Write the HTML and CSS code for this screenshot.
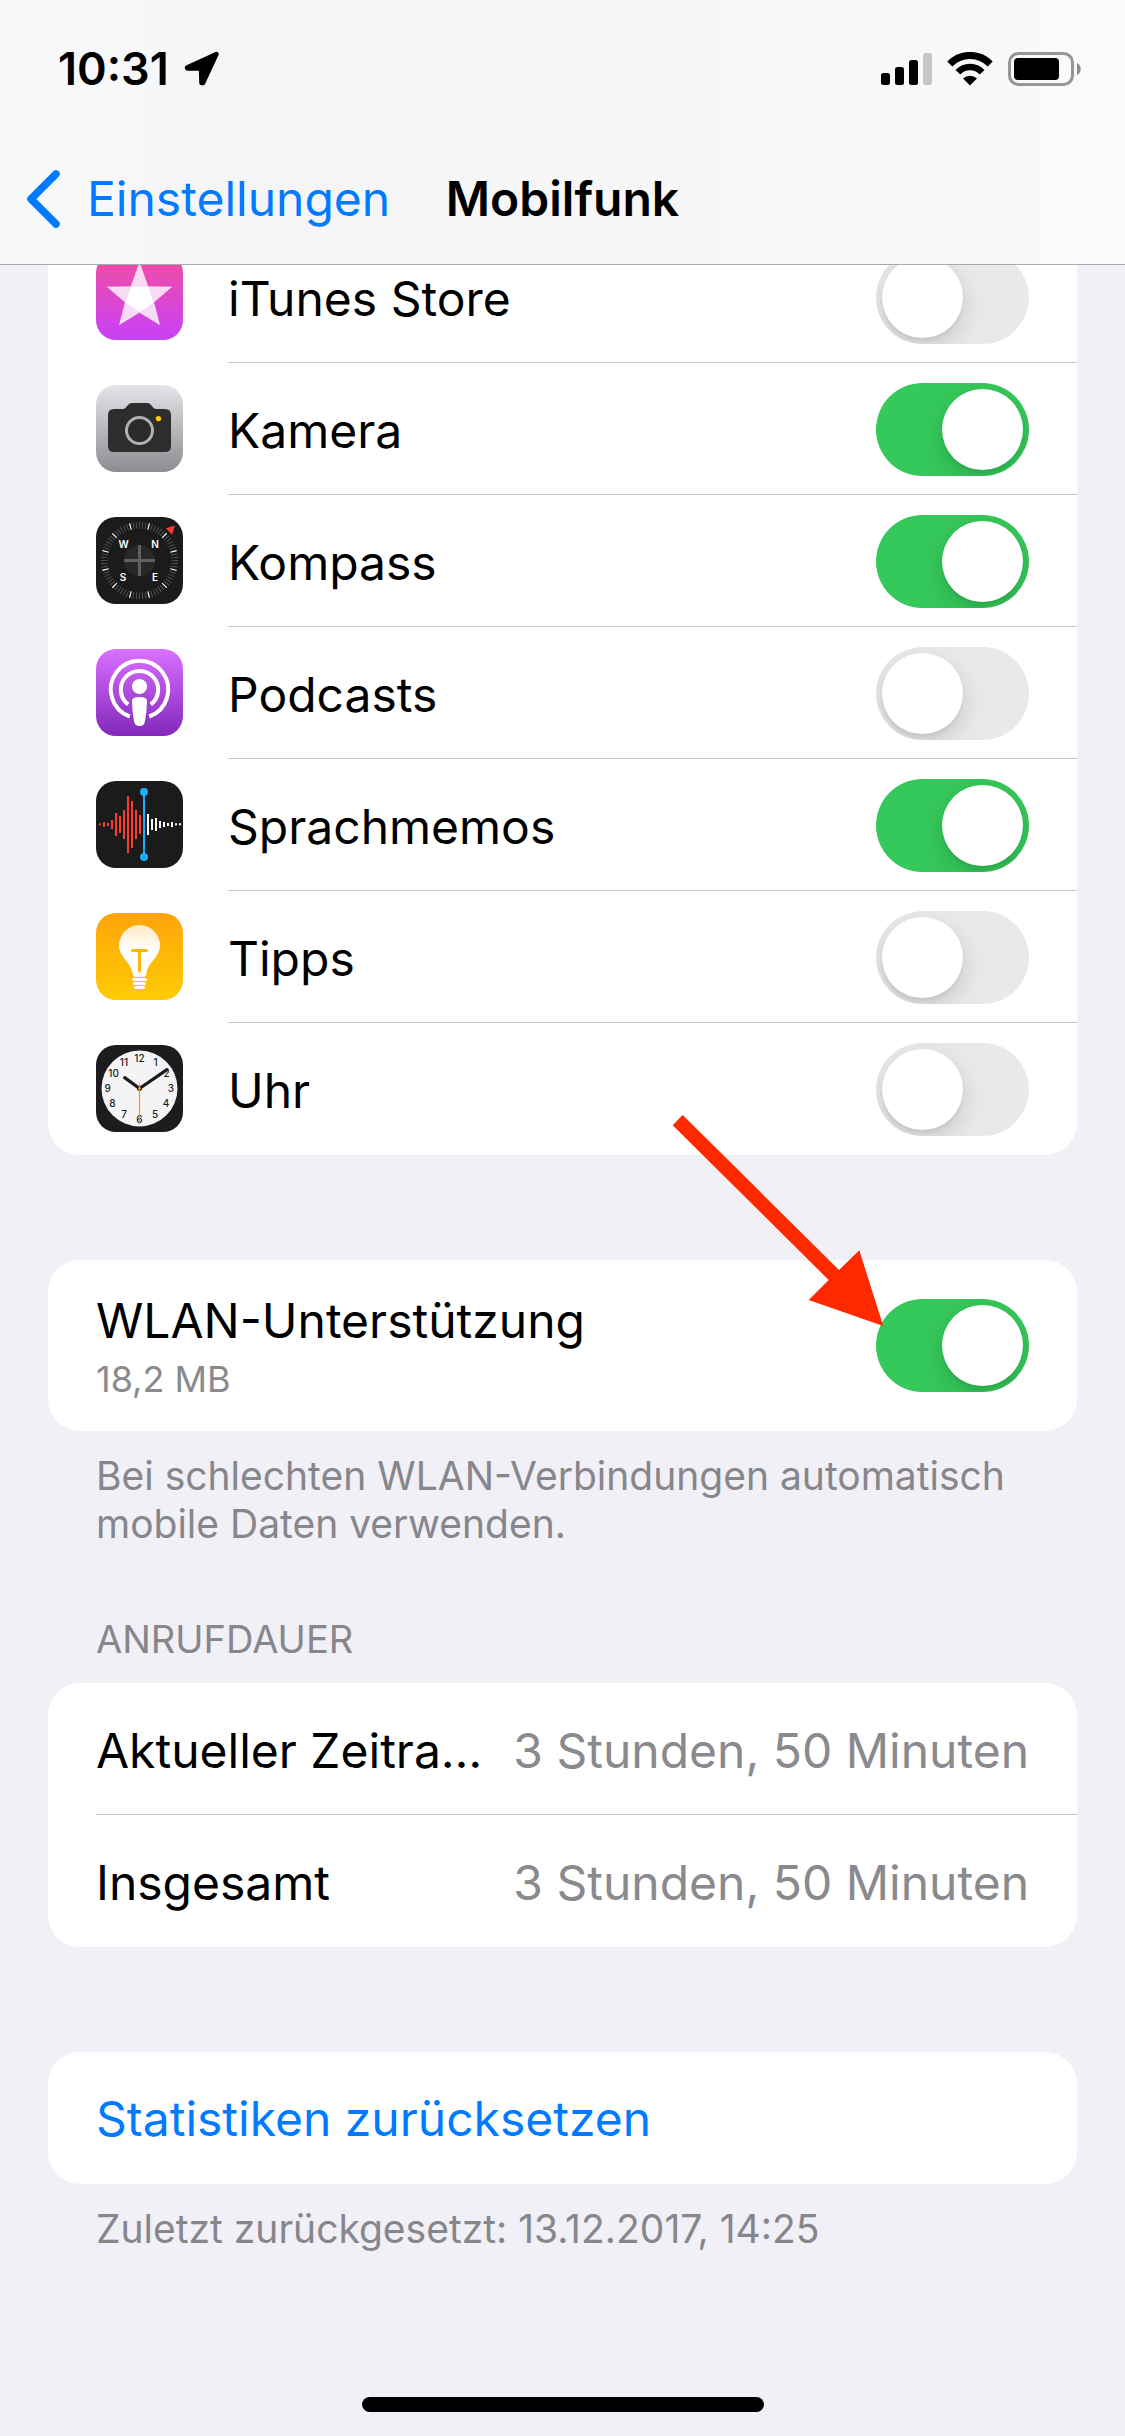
FILE: index.html
```html
<!DOCTYPE html>
<html lang="de">
<head>
  <meta charset="UTF-8" />
  <meta name="viewport" content="width=device-width, initial-scale=1.0"/>
  <title>Mobilfunk</title>
  <link rel="stylesheet" href="styles.css">
</head>
<body>
  <header class="top">
    <div class="status-bar">
      <div class="status-left">
        <span class="time">10:31</span>
        <svg width="36" height="36" viewBox="0 0 36 36" aria-hidden="true">
          <path d="M32.500 3L3 16.500L3.500 17.500L17 17.500L17.500 32L19 32Z" fill="#000" stroke="#000" stroke-width="4.500" stroke-linejoin="round"/>
        </svg>
      </div>
      <div class="status-right">
        <svg width="51" height="34" viewBox="0 0 51 34" aria-hidden="true">
          <rect x="0" y="21" width="9" height="12" rx="2.500"/>
          <rect x="14" y="15" width="9" height="18" rx="2.500"/>
          <rect x="28" y="8" width="9" height="25" rx="2.500"/>
          <rect x="42" y="1" width="9" height="32" rx="2.500" fill="#c5c6c5"/>
        </svg>
        <svg width="46" height="34" viewBox="0 0 46 34" aria-hidden="true">
          <path d="M2.800 12A28 28 0 0 1 43.200 12" fill="none" stroke="#000" stroke-width="7"/>
          <path d="M10.900 20.300A16.500 16.500 0 0 1 35.100 20.300" fill="none" stroke="#000" stroke-width="6.500"/>
          <path d="M23 33.600L16 26.500A10.500 10.500 0 0 1 30 26.500Z"/>
        </svg>
        <svg width="74" height="34" viewBox="0 0 74 34" aria-hidden="true">
          <rect x="1.500" y="1.500" width="63" height="31" rx="9" fill="none" stroke="#969696" stroke-width="3"/>
          <rect x="6" y="6" width="45" height="22" rx="4"/>
          <path d="M69 11C74 13 74 21 69 23Z" fill="#8f8f8f"/>
        </svg>
      </div>
    </div>
    <nav class="nav-bar">
      <a class="back" href="#">
        <svg width="34" height="58" viewBox="0 0 34 58" aria-hidden="true">
          <path d="M30 4L5 29L30 54" fill="none" stroke="#007aff" stroke-width="7.500" stroke-linecap="round" stroke-linejoin="round"/>
        </svg>
        Einstellungen
      </a>
      <h1>Mobilfunk</h1>
    </nav>
  </header>

  <main>
    <section class="card apps">
      <label class="row">
        <svg class="app-icon" viewBox="0 0 87 87" aria-hidden="true">
          <defs>
            <linearGradient id="itunes-bg" x1="0" y1="0" x2="0" y2="1">
              <stop offset="0" stop-color="#f24f9f"/>
              <stop offset="1" stop-color="#c840f6"/>
            </linearGradient>
          </defs>
          <rect width="87" height="87" fill="url(#itunes-bg)"/>
          <path d="M43.500 10L52 33.700L75.500 34L57.700 49.300L63.500 71.500L43.500 59.300L23.500 71.500L29.300 49.300L11.500 34L35 33.700Z" fill="#fff" fill-opacity="0.800" stroke="#fff" stroke-opacity="0.500" stroke-linejoin="round"/>
          <path d="M35 33.700L52 33.700L57.700 49.300L43.500 59.300L29.300 49.300Z" fill="#fff"/>
        </svg>
        <span class="row-body">
          <span class="row-text">iTunes Store</span>
          <input class="switch" type="checkbox" role="switch">
        </span>
      </label>

      <label class="row">
        <svg class="app-icon" viewBox="0 0 87 87" aria-hidden="true">
          <defs>
            <linearGradient id="camera-bg" x1="0" y1="0" x2="0" y2="1">
              <stop offset="0" stop-color="#e4e4e9"/>
              <stop offset="1" stop-color="#8d8c91"/>
            </linearGradient>
          </defs>
          <rect width="87" height="87" fill="url(#camera-bg)"/>
          <path d="M18 24H27C31 24 31 18 36 18H51C56 18 56 24 60 24H69Q75 24 75 30V61Q75 67 69 67H18Q12 67 12 61V30Q12 24 18 24Z" fill="#2d2d2e"/>
          <circle cx="43.500" cy="45.500" r="13" fill="#2b2b2c" stroke="#b0b0b6" stroke-width="3"/>
          <circle cx="62.500" cy="33.600" r="2.700" fill="#ffcc00"/>
        </svg>
        <span class="row-body">
          <span class="row-text">Kamera</span>
          <input class="switch" type="checkbox" role="switch" checked>
        </span>
      </label>

      <label class="row">
        <svg class="app-icon" viewBox="0 0 87 87" aria-hidden="true">
          <rect width="87" height="87" fill="#1b1b1b"/>
          <!-- dial: a thin tick every 5 degrees, a bright one every 30 -->
          <circle cx="43.500" cy="43.500" r="35.200" fill="none" stroke="#5e5e5e" stroke-width="6.500" pathLength="360" stroke-dasharray="1.300 3.700" stroke-dashoffset="0.650"/>
          <circle cx="43.500" cy="43.500" r="35.200" fill="none" stroke="#fff" stroke-width="6.500" pathLength="360" stroke-dasharray="1.800 28.200" stroke-dashoffset="0.900" transform="rotate(15 43.500 43.500)"/>
          <circle cx="43.500" cy="43.500" r="15.500" fill="#282828"/>
          <path d="M28 43.500H59M43.500 28V59" stroke="#606060" stroke-width="3"/>
          <path d="M69.700 11.300L78.800 8.500L76.300 17.500Z" fill="#ff3b30"/>
          <g class="compass-text">
            <text x="27.500" y="31">W</text>
            <text x="59" y="31">N</text>
            <text x="27" y="64">S</text>
            <text x="59" y="64">E</text>
          </g>
        </svg>
        <span class="row-body">
          <span class="row-text">Kompass</span>
          <input class="switch" type="checkbox" role="switch" checked>
        </span>
      </label>

      <label class="row">
        <svg class="app-icon" viewBox="0 0 87 87" aria-hidden="true">
          <defs>
            <linearGradient id="podcast-bg" x1="0" y1="0" x2="0" y2="1">
              <stop offset="0" stop-color="#da70ff"/>
              <stop offset="1" stop-color="#8128bb"/>
            </linearGradient>
          </defs>
          <rect width="87" height="87" fill="url(#podcast-bg)"/>
          <path d="M33.800 67.500A28.700 28.700 0 1 1 53.200 67.500" fill="none" stroke="#fff" stroke-width="4"/>
          <path d="M32.200 55.500A18.700 18.700 0 1 1 54.800 55.500" fill="none" stroke="#fff" stroke-width="4"/>
          <circle cx="43.500" cy="37.500" r="7.600" fill="#fff"/>
          <path d="M36 52Q36 48 43.500 48T51 52Q51 63 48.800 73Q48 77 43.500 77T38.200 73Q36 63 36 52Z" fill="#fff"/>
        </svg>
        <span class="row-body">
          <span class="row-text">Podcasts</span>
          <input class="switch" type="checkbox" role="switch">
        </span>
      </label>

      <label class="row">
        <svg class="app-icon" viewBox="0 0 87 87" aria-hidden="true">
          <rect width="87" height="87" fill="#1b1b1b"/>
          <path d="M4 42.300v2M8 41v5M12 42v3M16 39v9M20 32v23M24 35v17M28 29v29M32 15v57M36 20v47M40 29v29M44 34v19" stroke="#ff3b30" stroke-width="2"/>
          <path d="M52 33v21M56 38v11M60 37v13M64 40v7M68 41v5M72 42v3M76 41v5M80 42.300v2M84 42.300v2" stroke="#fff" stroke-width="2"/>
          <path d="M48 11V76" stroke="#1badf8" stroke-width="2"/>
          <circle cx="48" cy="11" r="4" fill="#1badf8"/>
          <circle cx="48" cy="76" r="4" fill="#1badf8"/>
        </svg>
        <span class="row-body">
          <span class="row-text">Sprachmemos</span>
          <input class="switch" type="checkbox" role="switch" checked>
        </span>
      </label>

      <label class="row">
        <svg class="app-icon" viewBox="0 0 87 87" aria-hidden="true">
          <defs>
            <linearGradient id="tips-bg" x1="0" y1="0" x2="0" y2="1">
              <stop offset="0" stop-color="#fea40a"/>
              <stop offset="1" stop-color="#fecb04"/>
            </linearGradient>
            <linearGradient id="bulb" x1="0" y1="0" x2="0" y2="1">
              <stop offset="0" stop-color="#fdeac4"/>
              <stop offset="0.500" stop-color="#fff"/>
            </linearGradient>
          </defs>
          <rect width="87" height="87" fill="url(#tips-bg)"/>
          <path d="M43.500 12A20.500 20.500 0 0 1 64 32.500C64 44 51.500 50 50.500 60Q50.500 64 47 64H40Q36.500 64 36.500 60C35.500 50 23 44 23 32.500A20.500 20.500 0 0 1 43.500 12Z" fill="url(#bulb)"/>
          <path d="M36.500 37.500H50.500M43.500 37.500V58" fill="none" stroke="#fdb707" stroke-width="3" stroke-linecap="round"/>
          <path d="M37.500 66.500H49.500M38.500 70.500H48.500M39.500 74.500H47.500" stroke="#fff" stroke-width="3" stroke-linecap="round"/>
        </svg>
        <span class="row-body">
          <span class="row-text">Tipps</span>
          <input class="switch" type="checkbox" role="switch">
        </span>
      </label>

      <label class="row">
        <svg class="app-icon" viewBox="0 0 87 87" aria-hidden="true">
          <rect width="87" height="87" fill="#1c1c1e"/>
          <circle cx="43.500" cy="43.500" r="38" fill="#f4f4f6"/>
          <g class="clock-text">
            <text x="43.500" y="16.500">12</text>
            <text x="59.600" y="21">1</text>
            <text x="70.500" y="32.300">2</text>
            <text x="75" y="47.300">3</text>
            <text x="70" y="62">4</text>
            <text x="59" y="73.300">5</text>
            <text x="43.500" y="78.300">6</text>
            <text x="28" y="73.300">7</text>
            <text x="16.300" y="62">8</text>
            <text x="11.700" y="47.300">9</text>
            <text x="17.600" y="32.300">10</text>
            <text x="28" y="21">11</text>
          </g>
          <path d="M43.500 43.500L28.700 32.700M43.500 43.500L71 24.700" stroke="#1c1c1e" stroke-width="3.300" stroke-linecap="round"/>
          <circle cx="43.500" cy="43.500" r="2.500" fill="#1c1c1e"/>
          <path d="M43.500 38.500V79" stroke="#ff9500" stroke-width="1.200"/>
          <circle cx="43.500" cy="43.500" r="1.300" fill="#ff9500"/>
        </svg>
        <span class="row-body">
          <span class="row-text">Uhr</span>
          <input class="switch" type="checkbox" role="switch">
        </span>
      </label>
    </section>

    <section class="card assist">
      <label class="row">
        <span class="row-body">
          <span class="row-text">WLAN-Unterstützung<small>18,2 MB</small></span>
          <input class="switch" type="checkbox" role="switch" checked>
        </span>
      </label>
      <svg class="arrow" width="215" height="215" viewBox="0 0 215 215" aria-hidden="true">
        <path d="M12.700 2L169 157L189.300 137.300L213.300 213L138.700 187L158.700 167L2.700 12.300Z" fill="#ff2900"/>
      </svg>
    </section>
    <p class="note">Bei schlechten WLAN-Verbindungen automatisch mobile Daten verwenden.</p>

    <h2>Anrufdauer</h2>
    <section class="card">
      <div class="row">
        <div class="row-body">
          <span class="row-text">Aktueller Zeitra…</span>
          <span class="value">3 Stunden, 50 Minuten</span>
        </div>
      </div>
      <div class="row">
        <div class="row-body">
          <span class="row-text">Insgesamt</span>
          <span class="value">3 Stunden, 50 Minuten</span>
        </div>
      </div>
    </section>

    <section class="card reset">
      <button class="reset-btn" type="button">Statistiken zurücksetzen</button>
    </section>
    <p class="note">Zuletzt zurückgesetzt: 13.12.2017, 14:25</p>
  </main>

  <div class="home-bar"></div>
</body>
</html>
```

FILE: styles.css
```css
* { box-sizing: border-box; }
body {
  margin: 0;
  min-height: 100vh;
  display: flex;
  flex-direction: column;
  background: #f1f0f6;
  color: #000;
  font-family: Inter, "Liberation Sans", sans-serif;
  font-size: 48px;
  line-height: 60px;
}
.top {
  position: sticky;
  top: 0;
  z-index: 10;
  background: linear-gradient(90deg, #f8f9fa 0%, #f5f5f8 22%, #f6f6f6 45%, #f7f7f7 75%, #f9faf9 100%);
  border-bottom: 1px solid #aaaaad;
}
.status-bar {
  height: 132px;
  padding: 6px 43px 0 58px;
  display: flex;
  align-items: center;
  justify-content: space-between;
}
.status-left,
.status-right {
  display: flex;
  align-items: center;
  gap: 15px;
}
.time {
  font-size: 45px;
  font-weight: 600;
}
.nav-bar {
  height: 132px;
  padding: 2px 26px 0;
  display: grid;
  grid-template-columns: 1fr auto 1fr;
  align-items: center;
}
.back {
  display: flex;
  align-items: center;
  gap: 27px;
  color: #007aff;
  text-decoration: none;
}
h1 {
  margin: 0;
  font-size: 48px;
  font-weight: 600;
}
main {
  flex: 1;
  padding: 0 48px;
}
.card {
  position: relative;
  background: #fff;
  border-radius: 32px;
}
/* the list is scrolled a little way under the header */
.apps {
  margin-top: -34px;
}
.row {
  display: flex;
  align-items: center;
  padding-left: 48px;
}
.app-icon {
  width: 87px;
  height: 87px;
  margin: 0 45px 1px 0;
  border-radius: 20px;
  flex-shrink: 0;
}
.row-body {
  flex: 1;
  min-width: 0;
  min-height: 132px;
  padding: 2px 48px 0 0;
  display: flex;
  align-items: center;
  justify-content: space-between;
  gap: 20px;
  border-bottom: 1px solid #c6c6c8;
}
.row:last-of-type .row-body {
  border-bottom-color: transparent;
}
.row-text,
.value {
  padding-top: 2px;
  white-space: nowrap;
}
.row-text {
  min-width: 0;
  overflow: hidden;
  text-overflow: ellipsis;
}
.row-text small {
  display: block;
  margin-top: 6px;
  font-size: 36px;
  line-height: 44px;
  color: #8a8a8e;
}
.value {
  color: #8a8a8e;
}
.switch {
  appearance: none;
  width: 153px;
  height: 93px;
  margin: 0;
  padding: 6px;
  flex-shrink: 0;
  display: flex;
  overflow: hidden;
  border-radius: 47px;
  background: #e9e9ea;
  cursor: pointer;
}
.switch::before {
  content: "";
  width: 81px;
  height: 81px;
  border-radius: 50%;
  background: #fff;
  box-shadow: 0 9px 24px rgba(0,0,0,0.15), 0 3px 3px rgba(0,0,0,0.05);
}
.switch:checked {
  justify-content: flex-end;
  background: #35c85a;
}
.compass-text {
  fill: #fff;
  font-size: 10px;
  font-weight: 600;
  text-anchor: middle;
}
.clock-text {
  fill: #1c1c1e;
  font-size: 10px;
  font-weight: 500;
  text-anchor: middle;
}
.assist {
  margin-top: 105px;
}
.assist .row-body {
  min-height: 171px;
  padding-top: 0;
}
.arrow {
  position: absolute;
  right: 192px;
  top: -147px;
  pointer-events: none;
}
.note,
h2 {
  padding: 0 48px;
  font-weight: 400;
  line-height: 48px;
  color: #86868b;
}
.note {
  margin: 21px 0 0;
  font-size: 39px;
}
h2 {
  margin: 67px 0 20px;
  font-size: 38px;
  text-transform: uppercase;
}
.reset {
  margin-top: 105px;
}
.reset-btn {
  display: block;
  width: 100%;
  min-height: 132px;
  padding: 2px 48px 0;
  border: none;
  border-radius: 32px;
  background: none;
  color: #007aff;
  font: inherit;
  text-align: left;
  cursor: pointer;
}
.home-bar {
  width: 402px;
  height: 15px;
  margin: 0 auto 24px;
  border-radius: 8px;
  background: #000;
}
```
